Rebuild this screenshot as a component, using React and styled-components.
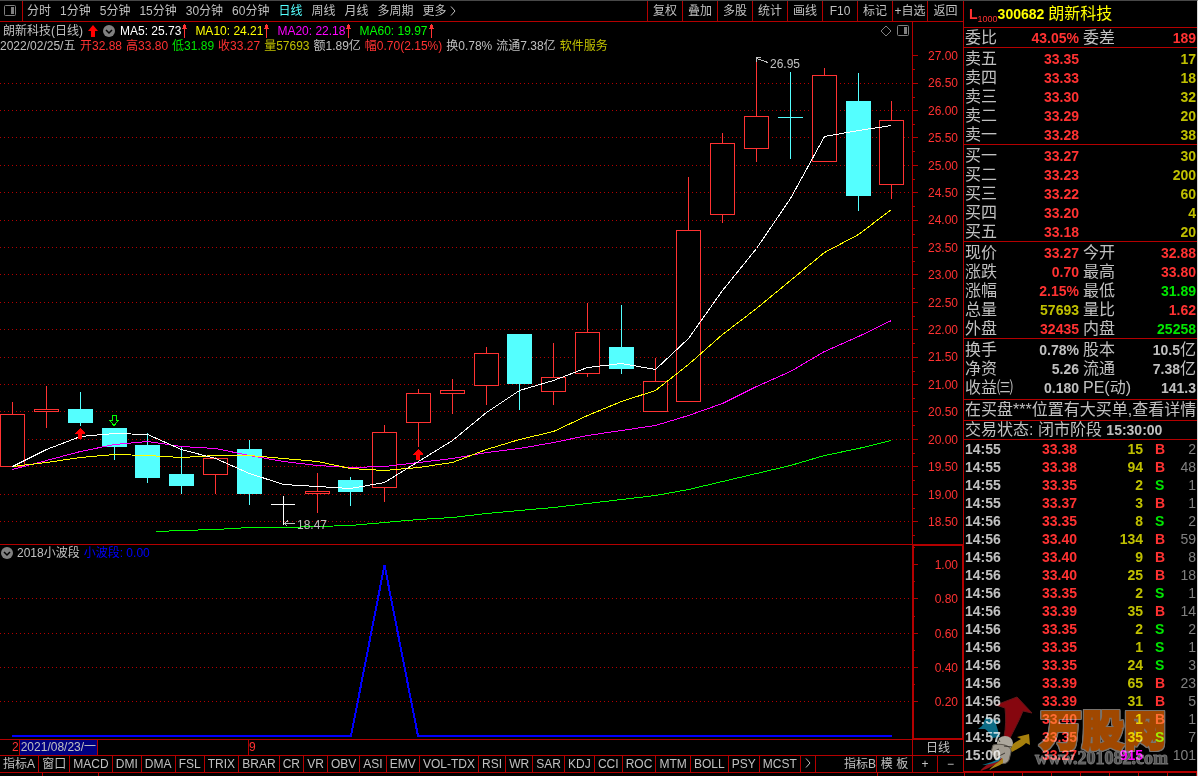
import React from "react";
import styled, { createGlobalStyle } from "styled-components";

const colors = {
  line: "#b40000",
  up: "#ff3232",
  down: "#54ffff",
  text: "#c0c0c0",
  muted: "#808080",
  yellow: "#ffff00",
  olive: "#c0c000",
  green: "#00e600",
  magenta: "#ff00ff",
  blue: "#0000ff",
  navy: "#000080",
};

const GlobalStyle = createGlobalStyle`
  * {
    box-sizing: border-box;
  }

  body {
    margin: 0;
    background: #000;
    color: ${colors.text};
    font: 12px/14px "Liberation Sans", "Noto Sans CJK SC", sans-serif;
  }

  button {
    font: inherit;
    color: inherit;
    background: none;
    border: 0;
    padding: 0;
    cursor: pointer;
  }
`;

const Page = styled.div`
  height: 100vh;
  display: flex;
  flex-direction: column;
  border-top: 1px solid #484848;
  border-right: 1px solid #d8d8d8;
  overflow: hidden;
  white-space: nowrap;
`;

const Body = styled.div`
  flex: 1;
  min-height: 0;
  display: flex;
`;

const Main = styled.main`
  flex: 1;
  min-width: 0;
  display: flex;
  flex-direction: column;
`;

/* toolbar */

const Toolbar = styled.nav`
  height: 21px;
  display: flex;
  border-bottom: 1px solid ${colors.line};
`;

const ToolIcon = styled.button`
  width: 23px;
  padding: 3px 0 0 4px;
  border-right: 1px solid ${colors.line};
  text-align: left;
`;

const Periods = styled.div`
  flex: 1;
  display: flex;
  align-items: center;
  gap: 9px;
  padding-left: 4px;
`;

const Period = styled.button`
  display: flex;
  align-items: center;
  gap: 3px;
  color: ${(p) => (p.$active ? colors.down : colors.text)};
`;

const Tools = styled.div`
  display: flex;
  width: 316px;
`;

const Tool = styled.button`
  width: 35px;
  border-left: 1px solid ${colors.line};

  &:last-child {
    flex: 1;
  }
`;

/* charts */

const Pane = styled.section`
  display: flex;
  flex: ${(p) => (p.$fixed ? "none" : 1)};
  height: ${(p) => (p.$fixed ? "195px" : "auto")};
  min-height: 0;
  border-bottom: 1px solid ${colors.line};
`;

const Plot = styled.div`
  flex: 1;
  min-width: 0;
  min-height: 0;
  display: flex;
  flex-direction: column;
`;

const Drawing = styled.svg`
  display: block;
  width: 100%;
  flex: 1;
  min-height: 0;
  shape-rendering: crispEdges;
`;

const Head = styled.div`
  display: flex;
  align-items: center;
  padding: 0 3px 0 ${(p) => (p.$small ? 1 : 3)}px;
  height: ${(p) => (p.$small ? 16 : 17)}px;
  gap: ${(p) => (p.$small ? 4 : 5)}px;
`;

const Averages = styled.div`
  flex: 1;
  display: flex;
  gap: 8px;
`;

const Average = styled.span`
  display: flex;
  align-items: center;
  gap: 1px;
  color: ${(p) => p.$color};
`;

const Summary = styled.div`
  display: flex;
  align-items: center;
  gap: 4px;
  height: 13px;
`;

const Figure = styled.span`
  color: ${(p) => p.$color};

  &:first-child {
    min-width: 76px;
  }
`;

const Axis = styled.div`
  width: 51px;
  display: flex;
  border-left: ${(p) => (p.$thick ? 2 : 1)}px solid ${colors.line};
  ${(p) =>
    p.$thick &&
    `
    border-top: 1px solid ${colors.line};
    border-right: 1px solid ${colors.line};
    border-bottom: 1px solid ${colors.line};
  `}
`;

const Ticks = styled.svg`
  display: block;
  width: 6px;
  height: 100%;
  shape-rendering: crispEdges;
`;

const AxisLabels = styled.div`
  flex: 1;
  display: flex;
  flex-direction: column;
  justify-content: space-between;
  align-items: flex-end;
  padding: ${(p) => p.$pad};
  color: ${colors.up};
`;

/* rows below the charts */

const DateRow = styled.div`
  height: 16px;
  display: flex;
  border-bottom: 1px solid ${colors.line};
`;

const DateTrack = styled.div`
  flex: 1;
  display: flex;
  padding-left: 12px;
  color: ${colors.up};
`;

const DateMark = styled.span`
  width: 236px;
  display: flex;
`;

const CurrentDate = styled.time`
  width: 79px;
  padding-left: 1px;
  color: ${colors.text};
  background: ${colors.navy};
  border: solid ${colors.line};
  border-width: 0 1px;
`;

const NextMonth = styled.span`
  border-left: 1px solid ${colors.line};
`;

const Corner = styled.button`
  width: 51px;
  border-left: 1px solid ${colors.line};
`;

const IndicatorRow = styled.div`
  height: 16px;
  display: flex;
`;

const Indicators = styled.div`
  flex: 1;
  display: flex;
`;

const Indicator = styled.button`
  flex: 1 1 auto;
  border-right: 1px solid ${colors.line};
`;

const Side = styled.button`
  width: ${(p) => p.$w}px;
  text-align: ${(p) => p.$align || "center"};
  border-right: ${(p) => (p.$open ? 0 : 1)}px solid ${colors.line};
`;

/* quote panel */

const Panel = styled.aside`
  position: relative;
  width: 234px;
  border-left: 1px solid ${colors.line};
  font-size: 16px;
  line-height: 18px;
`;

const Title = styled.h1`
  margin: 0;
  height: 27px;
  padding-left: 5px;
  display: flex;
  align-items: center;
  border-bottom: 1px solid ${colors.line};
  color: ${colors.yellow};
  font-size: 16px;
  font-weight: 400;
`;

const Code = styled.span`
  font-size: 14px;
  font-weight: 700;
  margin-right: 4px;
`;

const Level = styled.span`
  display: flex;
  align-items: flex-end;
  color: ${colors.up};
  font-size: 14px;
  font-weight: 700;

  sub {
    font-size: 9px;
    line-height: 8px;
    font-weight: 400;
    vertical-align: baseline;
  }
`;

const Block = styled.div`
  padding: ${(p) => p.$pad || "0 1px"};
  border-bottom: 1px solid ${colors.line};
  overflow: hidden;
`;

const Grid = styled.table`
  width: 100%;
  table-layout: fixed;
  border-collapse: collapse;

  th,
  td {
    padding: 0;
    height: ${(p) => p.$row}px;
    text-align: left;
    font-weight: 400;
  }
`;

const Num = styled.td`
  && {
    font-size: 14px;
    font-weight: ${(p) => (p.$thin ? 400 : 700)};
    color: ${(p) => p.$color || colors.text};
    text-align: ${(p) => (p.$left ? "left" : "right")};
    padding-left: ${(p) => (p.$left ? 12 : 0)}px;
  }
`;

const SecondLabel = styled.th`
  && {
    padding-left: 4px;
  }
`;

const Unit = styled.span`
  font-size: 16px;
  font-weight: 400;
`;

const Clock = styled.time`
  font-size: 14px;
  font-weight: 700;
`;

const Watermark = styled.svg`
  position: absolute;
  right: 24px;
  bottom: 0;
  opacity: 0.8;
  mix-blend-mode: screen;
  pointer-events: none;
`;

const Brand = styled.text`
  font: 900 42px "Noto Sans CJK SC", sans-serif;
  fill: #c85a00;
  stroke: #c85a00;
  stroke-width: 2px;
  filter: drop-shadow(1px 0 0 #96908a) drop-shadow(-1px 0 0 #96908a) drop-shadow(0 1px 0 #96908a)
    drop-shadow(0 -1px 0 #96908a);
`;

const Site = styled.text`
  font: 700 18px "Liberation Serif", serif;
  fill: #6a6a6a;
  stroke: #8e8e8e;
  stroke-width: 1px;
`;

/* status bar */

const StatusBar = styled.footer`
  height: 4px;
  display: flex;
  border-top: 1px solid ${colors.line};
`;

const StatusCell = styled.span`
  width: ${(p) => p.$w}px;
  flex: ${(p) => (p.$w ? "none" : 1)};
  border-right: 1px solid ${colors.line};
`;

const periods = ["分时", "1分钟", "5分钟", "15分钟", "30分钟", "60分钟", "日线", "周线", "月线", "多周期"];
const tools = ["复权", "叠加", "多股", "统计", "画线", "F10", "标记", "+自选", "返回"];
const indicators = [
  "指标A", "窗口", "MACD", "DMI", "DMA", "FSL", "TRIX", "BRAR", "CR", "VR", "OBV", "ASI", "EMV",
  "VOL-TDX", "RSI", "WR", "SAR", "KDJ", "CCI", "ROC", "MTM", "BOLL", "PSY", "MCST",
];

const averages = [
  ["MA5: 25.73", "#ffffff"],
  ["MA10: 24.21", colors.yellow],
  ["MA20: 22.18", colors.magenta],
  ["MA60: 19.97", "#00ff00"],
];

const figures = [
  ["2022/02/25/五", colors.text],
  ["开32.88", colors.up],
  ["高33.80", colors.up],
  ["低31.89", colors.green],
  ["收33.27", colors.up],
  ["量57693", colors.olive],
  ["额1.89亿", colors.text],
  ["幅0.70(2.15%)", colors.up],
  ["换0.78%", colors.text],
  ["流通7.38亿", colors.text],
  ["软件服务", colors.olive],
];

const gridY = [83, 110, 137, 165, 192, 220, 247, 274, 302, 329, 357, 384, 411, 439, 466, 494, 521];
const priceLabels = Array.from({ length: 18 }, (_, i) => (27 - i * 0.5).toFixed(2));

// x, high, body top, body bottom, low, kind
const candles = [
  [12, 402, 414, 466, 466, "up"],
  [46, 386, 409, 411, 428, "up"],
  [80, 392, 409, 423, 426, "down"],
  [114, 428, 428, 447, 460, "down"],
  [147, 433, 445, 478, 483, "down"],
  [181, 447, 474, 486, 494, "down"],
  [215, 457, 458, 474, 494, "up"],
  [249, 440, 449, 494, 505, "down"],
  [283, 496, 504, 504, 525, "flat"],
  [317, 473, 491, 493, 513, "up"],
  [350, 477, 480, 492, 506, "down"],
  [384, 425, 432, 487, 502, "up"],
  [418, 389, 393, 422, 447, "up"],
  [452, 379, 390, 393, 414, "up"],
  [486, 347, 353, 385, 405, "up"],
  [519, 334, 334, 384, 410, "down"],
  [553, 343, 377, 391, 405, "up"],
  [587, 303, 332, 373, 377, "up"],
  [621, 305, 347, 369, 374, "down"],
  [655, 358, 381, 411, 411, "up"],
  [688, 177, 230, 401, 401, "up"],
  [722, 133, 143, 214, 223, "up"],
  [756, 61, 116, 148, 162, "up"],
  [790, 72, 117, 118, 159, "down"],
  [824, 68, 75, 161, 161, "up"],
  [858, 73, 101, 196, 211, "down"],
  [891, 101, 120, 184, 199, "up"],
];

const curves = [
  ["#00ff00", "156,531 181,530 215,529 249,527 283,527 317,526 350,525 384,522 418,519 452,517 486,513 519,510 553,507 587,503 621,499 655,495 688,489 722,481 756,473 790,465 824,455 858,448 891,440"],
  [colors.magenta, "12,469 46,460 80,451 114,444 147,441 181,446 215,448 249,455 283,461 317,465 350,467 384,466 418,462 452,458 486,452 519,448 553,442 587,435 621,430 655,425 688,415 722,403 756,386 790,371 824,351 858,336 891,320"],
  [colors.yellow, "12,466 46,462 80,457 114,454 147,455 181,457 215,455 249,455 283,458 317,461 350,468 384,470 418,467 452,462 486,449 519,439 553,431 587,415 621,401 655,390 688,364 722,334 756,308 790,280 824,252 858,234 891,209"],
  ["#ffffff", "12,466 46,449 80,436 114,433 147,434 181,449 215,458 249,473 283,484 317,486 350,488 384,482 418,461 452,440 486,412 519,390 553,380 587,367 621,363 655,369 688,338 722,290 756,248 790,198 824,136 858,130 891,125"],
];

const sells = [["卖五", "33.35", 17], ["卖四", "33.33", 18], ["卖三", "33.30", 32], ["卖二", "33.29", 20], ["卖一", "33.28", 38]];
const buys = [["买一", "33.27", 30], ["买二", "33.23", 200], ["买三", "33.22", 60], ["买四", "33.20", 4], ["买五", "33.18", 20]];

const weibi = [["委比", "43.05%", colors.up, "委差", "189", colors.up]];
const prices = [
  ["现价", "33.27", colors.up, "今开", "32.88", colors.up],
  ["涨跌", "0.70", colors.up, "最高", "33.80", colors.up],
  ["涨幅", "2.15%", colors.up, "最低", "31.89", colors.green],
  ["总量", "57693", colors.olive, "量比", "1.62", colors.up],
  ["外盘", "32435", colors.up, "内盘", "25258", colors.green],
];
const basics = [
  ["换手", "0.78%", colors.text, "股本", "10.5", colors.text, "亿"],
  ["净资", "5.26", colors.text, "流通", "7.38", colors.text, "亿"],
  ["收益㈢", "0.180", colors.text, "PE(动)", "141.3", colors.text],
];

const trades = [
  ["14:55", "33.38", 15, "B", 2],
  ["14:55", "33.38", 94, "B", 48],
  ["14:55", "33.35", 2, "S", 1],
  ["14:55", "33.37", 3, "B", 1],
  ["14:56", "33.35", 8, "S", 2],
  ["14:56", "33.40", 134, "B", 59],
  ["14:56", "33.40", 9, "B", 8],
  ["14:56", "33.40", 25, "B", 18],
  ["14:56", "33.35", 2, "S", 1],
  ["14:56", "33.39", 35, "B", 14],
  ["14:56", "33.35", 2, "S", 2],
  ["14:56", "33.35", 1, "S", 1],
  ["14:56", "33.35", 24, "S", 3],
  ["14:56", "33.39", 65, "B", 23],
  ["14:56", "33.39", 31, "B", 5],
  ["14:56", "33.40", 1, "B", 1],
  ["14:57", "33.35", 35, "S", 7],
  ["15:00", "33.27", 915, "", 101],
];

const PanelIcon = ({ color = "#808080" }) => (
  <svg width="12" height="12" viewBox="0 0 12 12">
    <rect x="0.5" y="0.5" width="11" height="10" rx="1" fill="none" stroke={color} />
    <rect x="7" y="2" width="3" height="7" fill={color} />
  </svg>
);

const Chevron = () => (
  <svg width="6" height="10" viewBox="0 0 6 10">
    <path d="M1 0.5 5 5 1 9.5" fill="none" stroke={colors.text} />
  </svg>
);

const RoundIcon = () => (
  <svg width="12" height="12" viewBox="0 0 12 12">
    <circle cx="6" cy="6" r="6" fill="#808080" />
    <path d="M3 5 6 8 9 5" fill="none" stroke="#000" strokeWidth="1.5" />
  </svg>
);

const Rise = () => (
  <svg width="5" height="14" viewBox="0 0 5 14" shapeRendering="crispEdges">
    <path d="M2 0h1v1h1v3h1v1H0V4h1V1h1zM2 5h1v9H2z" fill={colors.up} />
  </svg>
);

const BigArrow = () => (
  <svg width="10" height="12" viewBox="0 0 10 12">
    <path d="M5 0 10 6H7v6H3V6H0z" fill="#ff0000" />
  </svg>
);

const Candle = ({ data: [x, high, top, bottom, low, kind] }) => {
  if (kind === "flat") {
    return <path d={`M${x - 12} ${top + 0.5}h24M${x + 0.5} ${high}V${low}`} stroke="#fff" />;
  }
  if (kind === "down") {
    return (
      <g fill={colors.down}>
        <rect x={x} y={high} width="1" height={low - high} />
        <rect x={x - 12} y={top} width="25" height={bottom - top} />
      </g>
    );
  }
  return (
    <g stroke={colors.up} fill="#000">
      <path d={`M${x + 0.5} ${high}V${low}`} />
      <rect x={x - 11.5} y={top + 0.5} width="24" height={bottom - top} />
    </g>
  );
};

const KLine = () => (
  <Drawing viewBox="0 52 912 492" preserveAspectRatio="none">
    {gridY.map((y) => (
      <path key={y} d={`M0 ${y + 0.5}H912`} stroke={colors.line} strokeDasharray="1 3" />
    ))}
    {candles.map((c) => (
      <Candle key={c[0]} data={c} />
    ))}
    {curves.map(([color, points]) => (
      <polyline key={color} points={points} transform="translate(0.5 0.5)" fill="none" stroke={color} />
    ))}
    <path d="M80 428 85 433V434H82v5h-4v-5h-3v-1z" fill="#ff0000" />
    <path d="M418 449 423 454V455H420v5h-4v-5h-3v-1z" fill="#ff0000" />
    <path d="M112.5 415.5h4v5h2L114 425.5 109.5 420.5h3z" fill="none" stroke="#00ff00" />
    <g fill="none" stroke={colors.text}>
      <path d="M768 62.5 756.5 58.5M761 57.5H756.5V62" />
      <path d="M295 523.5H284M288 520.5 284.5 523.5 287.5 526.5" />
    </g>
    <g fill={colors.text} fontSize="12">
      <text x="770" y="68">26.95</text>
      <text x="297" y="529">18.47</text>
    </g>
  </Drawing>
);

const Wave = () => (
  <Drawing viewBox="0 561 912 178" preserveAspectRatio="none">
    {[598, 633, 667, 701].map((y) => (
      <path key={y} d={`M0 ${y + 0.5}H912`} stroke={colors.line} strokeDasharray="1 3" />
    ))}
    <path d="M12 736H351L384.5 565 418 736H892" fill="none" stroke={colors.blue} strokeWidth="2" />
  </Drawing>
);

const QuoteTable = ({ rows }) => (
  <Grid $row={19}>
    <colgroup>
      <col width="58" />
      <col width="56" />
      <col width="58" />
      <col />
    </colgroup>
    <tbody>
      {rows.map(([a, av, ac, b, bv, bc, unit]) => (
        <tr key={a}>
          <th scope="row">{a}</th>
          <Num $color={ac}>{av}</Num>
          <SecondLabel scope="row">{b}</SecondLabel>
          <Num $color={bc}>
            {bv}
            {unit && <Unit>{unit}</Unit>}
          </Num>
        </tr>
      ))}
    </tbody>
  </Grid>
);

const BookTable = ({ rows }) => (
  <Grid $row={19}>
    <colgroup>
      <col width="58" />
      <col width="56" />
      <col />
    </colgroup>
    <tbody>
      {rows.map(([name, price, volume]) => (
        <tr key={name}>
          <th scope="row">{name}</th>
          <Num $color={colors.up}>{price}</Num>
          <Num $color={colors.olive}>{volume}</Num>
        </tr>
      ))}
    </tbody>
  </Grid>
);

const TradeTable = () => (
  <Grid $row={18}>
    <colgroup>
      <col width="46" />
      <col width="66" />
      <col width="66" />
      <col width="28" />
      <col />
    </colgroup>
    <tbody>
      {trades.map(([time, price, volume, side, count], i) => (
        <tr key={i}>
          <th scope="row">
            <Clock>{time}</Clock>
          </th>
          <Num $color={colors.up}>{price}</Num>
          <Num $color={side ? colors.olive : colors.magenta}>{volume}</Num>
          <Num $left $color={side === "B" ? colors.up : colors.green}>{side}</Num>
          <Num $thin $color={colors.muted}>{count}</Num>
        </tr>
      ))}
    </tbody>
  </Grid>
);

const Logo = () => (
  <Watermark width="198" height="78" viewBox="0 0 198 78">
    <path d="M42 3 57 19 48 17C44 27 39 36 34 46L29 43C31 33 31 23 30 14L21 11Z" fill="#a80812" stroke="#7d1a1e" />
    <path d="M11 23 26 28 21 30 25 43 17 44C15 40 13 37 10 35L3 35 7 32Z" fill="#0e86a6" />
    <path d="M42 43 54 40 55 51 51 49C47 53 42 55 37 58L34 54C37 50 41 48 46 45Z" fill="#d0a010" />
    <ellipse cx="30" cy="49" rx="8" ry="7" fill="#d8d2c4" />
    <path d="M18 51C25 49 37 51 36 58L34 66C31 72 23 70 20 64L16 58Z" fill="#c9c2b4" stroke="#756e62" />
    <path d="M23 45 25 48M29 52 37 53M20 57 24 55M22 63 30 59" stroke="#4c4740" fill="none" />
    <path d="M5 77C12 69 17 69 27 64L26 68C20 70 14 75 5 77Z" fill="#b5121b" />
    <path d="M7 71C14 69 19 68 26 63L24 67C19 69 14 71 7 71Z" fill="#1594b4" />
    <path d="M14 76C18 71 23 69 28 64L28 69C24 72 20 73 14 76Z" fill="#d5a51a" />
    <Brand x="65" y="52">万股网</Brand>
    <Site x="60" y="70">www.201082.com</Site>
  </Watermark>
);

const App = () => {
  return (
    <Page>
      <GlobalStyle />
      <Body>
        <Main>
          <Toolbar>
            <ToolIcon aria-label="panel">
              <PanelIcon />
            </ToolIcon>
            <Periods>
              {periods.map((name) => (
                <Period key={name} $active={name === "日线"}>{name}</Period>
              ))}
              <Period>
                更多 <Chevron />
              </Period>
            </Periods>
            <Tools>
              {tools.map((name) => (
                <Tool key={name}>{name}</Tool>
              ))}
            </Tools>
          </Toolbar>

          <Pane>
            <Plot>
              <Head>
                <span>朗新科技(日线)</span>
                <BigArrow />
                <RoundIcon />
                <Averages>
                  {averages.map(([text, color]) => (
                    <Average key={text} $color={color}>
                      {text}
                      <Rise />
                    </Average>
                  ))}
                </Averages>
                <svg width="12" height="12" viewBox="0 0 12 12">
                  <path d="M6 1 11 6 6 11 1 6Z" fill="none" stroke="#808080" />
                </svg>
                <PanelIcon />
              </Head>
              <Summary>
                {figures.map(([text, color]) => (
                  <Figure key={text} $color={color}>{text}</Figure>
                ))}
              </Summary>
              <KLine />
            </Plot>
            <Axis>
              <Ticks viewBox="0 22 6 522" preserveAspectRatio="none">
                {[55, ...gridY].map((y) => (
                  <path key={y} d={`M0 ${y + 0.5}H5M0 ${y + 14.5}H2`} stroke={colors.line} />
                ))}
              </Ticks>
              <AxisLabels $pad="27px 5px 15px 0">
                {priceLabels.map((label) => (
                  <span key={label}>{label}</span>
                ))}
              </AxisLabels>
            </Axis>
          </Pane>

          <Pane $fixed>
            <Plot>
              <Head $small>
                <RoundIcon />
                <span>2018小波段</span>
                <Average $color={colors.blue}>小波段: 0.00</Average>
              </Head>
              <Wave />
            </Plot>
            <Axis $thick>
              <Ticks viewBox="0 546 6 192" preserveAspectRatio="none">
                {[564, 598, 633, 667, 701].map((y) => (
                  <path key={y} d={`M0 ${y + 0.5}H4M0 ${y - 16.5}H1`} stroke={colors.line} />
                ))}
              </Ticks>
              <AxisLabels $pad="12px 4px 29px 0">
                {["1.00", "0.80", "0.60", "0.40", "0.20"].map((label) => (
                  <span key={label}>{label}</span>
                ))}
              </AxisLabels>
            </Axis>
          </Pane>

          <DateRow>
            <DateTrack>
              <DateMark>
                2<CurrentDate>2021/08/23/一</CurrentDate>
              </DateMark>
              <NextMonth>9</NextMonth>
            </DateTrack>
            <Corner>日线</Corner>
          </DateRow>

          <IndicatorRow>
            <Indicators>
              {indicators.map((name) => (
                <Indicator key={name}>{name}</Indicator>
              ))}
            </Indicators>
            <Side $w={15} aria-label="more">
              <Chevron />
            </Side>
            <Side $w={61} $align="right">指标B</Side>
            <Side $w={36}>模 板</Side>
            <Side $w={25}>+</Side>
            <Side $w={25} $open>−</Side>
          </IndicatorRow>
        </Main>

        <Panel>
          <Title>
            <Level>
              L<sub>1000</sub>
            </Level>
            <Code>300682</Code>
            朗新科技
          </Title>
          <Block>
            <QuoteTable rows={weibi} />
          </Block>
          <Block $pad="1px 1px 0">
            <BookTable rows={sells} />
          </Block>
          <Block $pad="1px 1px 0">
            <BookTable rows={buys} />
          </Block>
          <Block $pad="1px 1px 0">
            <QuoteTable rows={prices} />
          </Block>
          <Block $pad="1px 1px 2px">
            <QuoteTable rows={basics} />
          </Block>
          <Block $pad="1px 1px">在买盘***位置有大买单,查看详情</Block>
          <Block>
            交易状态: 闭市阶段 <Clock>15:30:00</Clock>
          </Block>
          <Block $pad="0 1px 7px">
            <TradeTable />
          </Block>
          <Logo />
        </Panel>
      </Body>
      <StatusBar>
        <StatusCell $w={43} />
        <StatusCell $w={56} />
        <StatusCell />
        <StatusCell $w={87} />
        {[1, 2, 3, 4, 5, 6, 7, 8].map((n) => (
          <StatusCell key={n} $w={29} />
        ))}
      </StatusBar>
    </Page>
  );
};

export default App;
